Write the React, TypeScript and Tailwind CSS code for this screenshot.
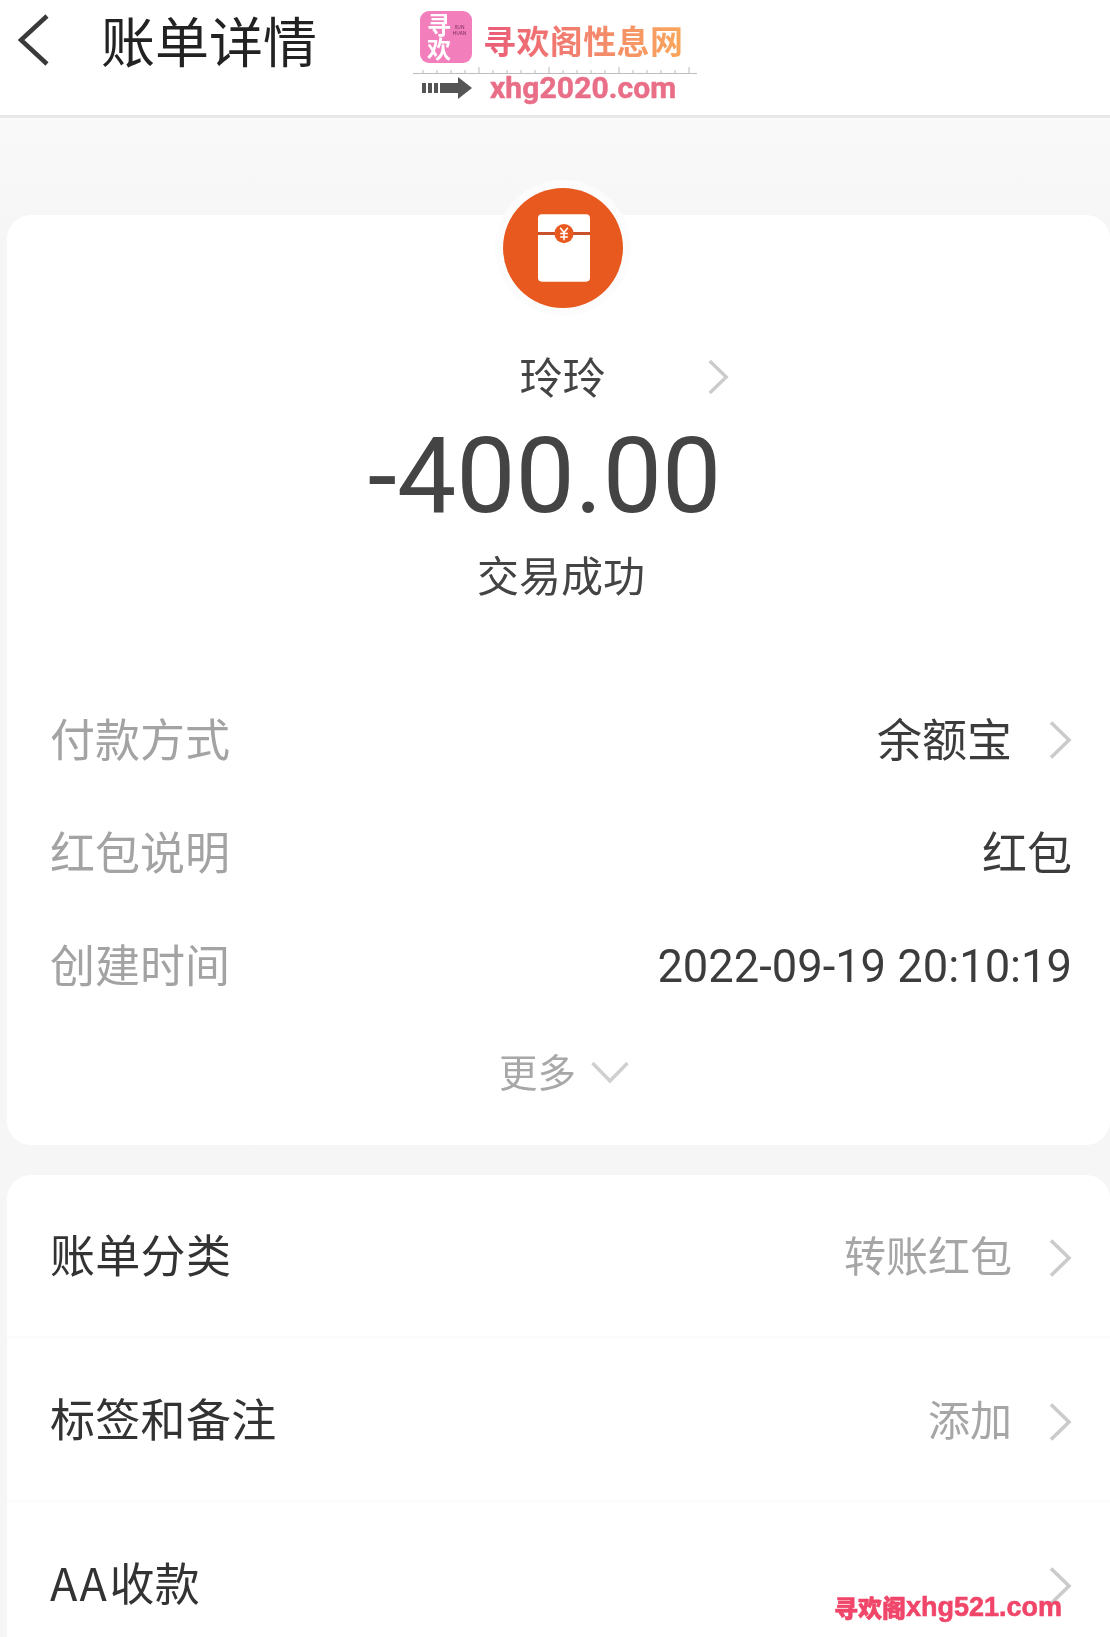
const fontStack = { fontFamily: '"Noto Sans CJK SC", Roboto, sans-serif' };

const Chevron = ({ className = 'w-[24px] h-[38px]' }: { className?: string }) => (
  <svg viewBox="0 0 24 38" className={className} fill="none" stroke="#cbcbcb" strokeWidth="3.6">
    <path d="M3 1.5 L21 19 L3 36.5" />
  </svg>
);

const InfoRow = ({ label, value, arrow, top }: { label: string; value: string; arrow?: boolean; top: string }) => (
  <div className={`flex items-center justify-between pl-[43px] pr-[38px] h-[48px] leading-[48px] ${top}`}>
    <span className="text-[45px] text-[#a3a3a3]">{label}</span>
    <div className="flex items-center">
      {value.startsWith('2022') ? (
        <span className="text-[45.3px] text-[#3c3c3c] mt-[6px]" style={{ fontFamily: 'Roboto, sans-serif' }}>{value}</span>
      ) : (
        <span className="text-[45px] text-[#3c3c3c]">{value}</span>
      )}
      {arrow && <span className="ml-[36px] mt-[4px]"><Chevron /></span>}
    </div>
  </div>
);

const ActionRow = ({ label, value, divider }: { label: React.ReactNode; value?: string; divider?: boolean }) => (
  <div className={`flex items-center justify-between pl-[43px] pr-[38px] pb-[4px] h-[164px] border-b-[3px] ${divider ? 'border-[#fcfcfc]' : 'border-transparent'}`}>
    <span className="text-[45px] text-[#333333] tracking-[0.3px]">{label}</span>
    <div className="flex items-center">
      {value && <span className="text-[42px] text-[#a6a6a6]">{value}</span>}
      <span className="ml-[36px] mt-[8px]"><Chevron /></span>
    </div>
  </div>
);

export default function App() {
  return (
    <div className="relative w-[1110px] h-[1637px] overflow-hidden bg-gradient-to-b from-[#fdfdfd] to-[#f6f6f6] to-[14%] blur-[0.5px]" style={fontStack}>
      {/* Header */}
      <header className="relative flex items-start h-[118px] bg-white border-b-[3px] border-[#e8e8e8] pl-[17px] pt-[14px]">
        <svg viewBox="0 0 32 52" className="w-[32px] h-[52px]" fill="none" stroke="#3a3a3a" strokeWidth="4.5">
          <path d="M30 2 L4 26 L30 50" />
        </svg>
        <h1 className="ml-[52px] -mt-[1px] text-[54px] leading-[54px] text-[#222222] font-normal">账单详情</h1>
      </header>

      {/* Watermark logo */}
      <div className="absolute left-[413px] top-[11px] w-[284px]">
        <div className="flex items-center pl-[7px]">
          <div className="flex items-center justify-center gap-[1px] w-[52px] h-[52px] rounded-[9px] bg-[#f27fbc] text-white">
            <span className="[writing-mode:vertical-rl] text-[24px] leading-[26px] font-bold">寻欢</span>
            <span className="text-[5px] leading-[6px] text-center text-[#7a2b57] -mt-[14px]">XUN<br />HUAN</span>
          </div>
          <span className="ml-[11px] mt-[6px] text-[33px] leading-none font-bold tracking-[0.4px] text-transparent bg-clip-text bg-gradient-to-r from-[#ea5a78] to-[#f9a75b]">寻欢阁性息网</span>
        </div>
        <svg viewBox="0 0 284 8" className="block w-[284px] h-[8px] mt-[3px]" stroke="#bdbdbd" strokeWidth="1">
          <path d="M0 7.5 H284 M10 4 V7 M24 4 V7 M38 4 V7 M52 4 V7 M66 1 V7 M80 4 V7 M94 4 V7 M108 4 V7 M122 4 V7 M136 1 V7 M150 4 V7 M164 4 V7 M178 4 V7 M192 4 V7 M206 1 V7 M220 4 V7 M234 4 V7 M248 4 V7 M262 4 V7 M276 1 V7" />
        </svg>
        <div className="flex items-center pl-[9px]">
          <svg viewBox="0 0 50 22" className="w-[50px] h-[22px]" fill="#555555">
            <path d="M0 6h4v10H0z M6 6h4v10H6z M12 6h4v10h-4z M18 6h12v10H18z M30 6h6V0l14 11-14 11v-6h-6z" />
          </svg>
          <span className="ml-[18px] text-[30px] leading-[28px] font-bold tracking-[0.1px] text-[#e96f88] [-webkit-text-stroke:0.5px_#e96f88]" style={{ fontFamily: 'Roboto, sans-serif' }}>xhg2020.com</span>
        </div>
      </div>

      {/* Summary card */}
      <section className="mt-[97px] ml-[7px] bg-white rounded-[24px] h-[930px]">
        <div className="relative">
          <div className="flex justify-center pl-[8px]">
            <div className="relative -mt-[27px] flex items-center justify-center w-[120px] h-[120px] rounded-full bg-[#e8591f] ring-[8px] ring-[#fcfcfc]">
              <svg viewBox="0 0 54 70" className="w-[52px] h-[70px] ml-[2px]">
                <rect width="54" height="70" rx="4" fill="#ffffff" />
                <path d="M0 20 H54" stroke="#c9522a" strokeWidth="3" />
                <circle cx="27" cy="20" r="10" fill="#e8591f" />
                <path d="M23 14 L27 19 L31 14 M27 19 V27 M23 20 H31 M23 23.5 H31" stroke="#ffffff" strokeWidth="1.6" fill="none" />
              </svg>
            </div>
          </div>
          <div className="relative flex justify-center pl-[8px] mt-[43px] h-[48px] leading-[48px]">
            <span className="text-[43px] text-[#444444]">玲玲</span>
            <span className="absolute left-[700px] top-[7px]"><Chevron className="w-[22px] h-[38px]" /></span>
          </div>
          <div className="flex justify-center pr-[28px] mt-[21px] h-[112px] text-[105.5px] leading-[112px] text-[#444444]" style={{ fontFamily: 'Roboto, sans-serif' }}>-400.00</div>
          <div className="flex justify-center pl-[5px] mt-[18px] h-[48px] text-[42px] leading-[48px] text-[#444444]">交易成功</div>
        </div>

        <InfoRow top="mt-[116px]" label="付款方式" value="余额宝" arrow />
        <InfoRow top="mt-[65px]" label="红包说明" value="红包" />
        <InfoRow top="mt-[65px]" label="创建时间" value="2022-09-19 20:10:19" />

        <div className="flex items-center justify-center pl-[11px] mt-[60px] h-[44px]">
          <span className="text-[38.5px] text-[#a8a8a8] leading-[44px]">更多</span>
          <svg viewBox="0 0 38 22" className="ml-[15px] mt-[4px] w-[38px] h-[22px]" fill="none" stroke="#cfcfcf" strokeWidth="3.4">
            <path d="M1.5 2 L19 20 L36.5 2" />
          </svg>
        </div>
      </section>

      {/* Actions card */}
      <section className="mt-[30px] ml-[7px] bg-white rounded-[24px]">
        <ActionRow label="账单分类" value="转账红包" divider />
        <ActionRow label="标签和备注" value="添加" divider />
        <ActionRow label={<><span className="tracking-[2.5px]">AA</span>收款</>} />
      </section>

      {/* Footer watermark */}
      <div className="absolute left-[834px] top-[1592px] flex items-center h-[30px] text-[#f0466a] whitespace-nowrap font-black [-webkit-text-stroke:0.6px_#f0466a]">
        <span className="text-[24px]">寻欢阁</span>
        <span className="text-[27px] font-bold" style={{ fontFamily: '"Liberation Sans", sans-serif' }}>xhg521.com</span>
      </div>
    </div>
  );
}
